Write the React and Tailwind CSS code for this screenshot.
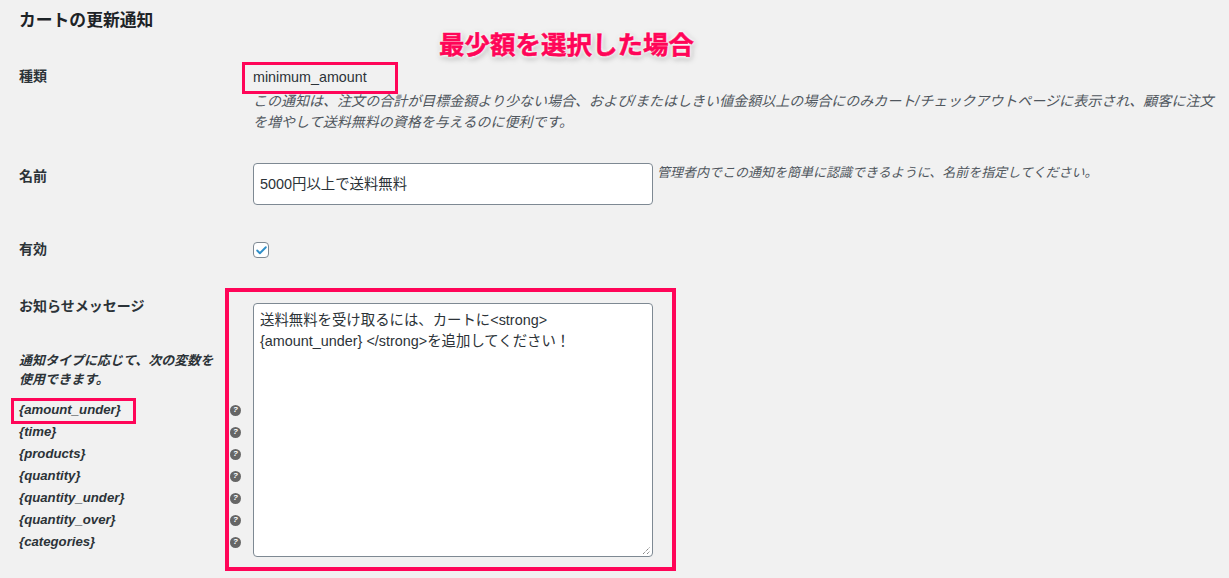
import { Check } from "lucide-react";

const variables = [
  "{amount_under}",
  "{time}",
  "{products}",
  "{quantity}",
  "{quantity_under}",
  "{quantity_over}",
  "{categories}",
];

function Label({ children, className = "" }) {
  return (
    <div className={`w-[234px] shrink-0 pl-[19px] text-[14px] font-bold leading-[20px] text-[#2c3338] ${className}`}>
      {children}
    </div>
  );
}

function HelpIcon() {
  return (
    <span className="flex h-[11px] w-[11px] items-center justify-center rounded-full bg-[#666] text-[8px] font-bold leading-none text-white">
      ?
    </span>
  );
}

export default function App() {
  return (
    <div className="relative h-[578px] w-full overflow-hidden bg-[#f1f1f1] font-['Liberation_Sans','Noto_Sans_CJK_JP',sans-serif] text-[14px] text-[#2c3338]">
      <h2 className="pl-[19px] pt-[10px] text-[16.8px] font-bold leading-[22px] text-[#1d2327]">カートの更新通知</h2>

      <div className="mt-[34px] flex">
        <Label>種類</Label>
        <div className="pl-[19px]">
          <div className="text-[14.3px] leading-[22px]">minimum_amount</div>
          <p className="mt-[3px] w-[965px] text-[14.03px] italic leading-[21px] text-[#50575e]">
            この通知は、注文の合計が目標金額より少ない場合、および/またはしきい値金額以上の場合にのみカート/チェックアウトページに表示され、顧客に注文を増やして送料無料の資格を与えるのに便利です。
          </p>
        </div>
      </div>

      <div className="mt-[30px] flex">
        <Label className="pt-[3px]">名前</Label>
        <div className="flex items-start pl-[19px]">
          <div className="flex h-[42px] w-[400px] items-center rounded-[4px] border border-[#7e8993] bg-white px-[6px] pt-px text-[14.4px]">
            5000円以上で送料無料
          </div>
          <span className="pl-[4px] pt-px text-[13px] italic leading-[18px] text-[#50575e]">
            管理者内でこの通知を簡単に認識できるように、名前を指定してください。
          </span>
        </div>
      </div>

      <div className="mt-[33px] flex">
        <Label className="pt-[1px]">有効</Label>
        <div className="pl-[19px] pt-[4px]">
          <span className="flex h-[16px] w-[16px] items-center justify-center rounded-[4px] border border-[#7e8993] bg-white">
            <Check size={13} strokeWidth={3.5} className="text-[#2f8fc9]" />
          </span>
        </div>
      </div>

      <div className="mt-[37px] flex">
        <div className="w-[234px] shrink-0 pl-[19px]">
          <div className="text-[14px] font-bold leading-[20px]">お知らせメッセージ</div>
          <p className="mt-[35px] w-[200px] text-[13px] font-bold italic leading-[19px] text-[#2c3338]">
            通知タイプに応じて、次の変数を使用できます。
          </p>
          <ul className="mt-[10px] w-[222px]">
            {variables.map((name) => (
              <li key={name} className="flex h-[22px] items-center justify-between text-[13.2px] font-bold italic">
                {name}
                <HelpIcon />
              </li>
            ))}
          </ul>
        </div>
        <div className="pl-[19px] pt-[7px]">
          <div className="relative h-[254px] w-[400px] rounded-[4px] border border-[#7e8993] bg-white px-[6px] py-[6px] text-[14.4px] leading-[21px]">
            送料無料を受け取るには、カートに&lt;strong&gt;
            <br />
            {"{amount_under}"} &lt;/strong&gt;を追加してください！
            <svg className="absolute bottom-px right-px" width="9" height="9" viewBox="0 0 9 9">
              <path d="M1 8 8 1M5 8 8 5" stroke="#555" strokeWidth="1" strokeDasharray="1 1" fill="none" />
            </svg>
          </div>
        </div>
      </div>

      {/* pink annotations drawn over the screenshot */}
      <div className="absolute left-[242px] top-[62px] h-[32px] w-[156px] border-[3px] border-[#ff0558]" />
      <div className="absolute left-[11px] top-[398px] h-[26px] w-[125px] border-[3px] border-[#ff0558]" />
      <div className="absolute left-[225px] top-[288px] h-[283px] w-[451px] border-[4px] border-[#ff0558]" />
      <div className="absolute left-[439px] top-[28px] text-[25.5px] font-bold leading-[34px] text-[#ff0558] [-webkit-text-stroke:0.5px_#ff0558] [text-shadow:0_0_3px_#fff,0_0_4px_#fff,0_0_4px_#fff,1px_2px_6px_rgba(0,0,0,0.4)]">
        最少額を選択した場合
      </div>
    </div>
  );
}
